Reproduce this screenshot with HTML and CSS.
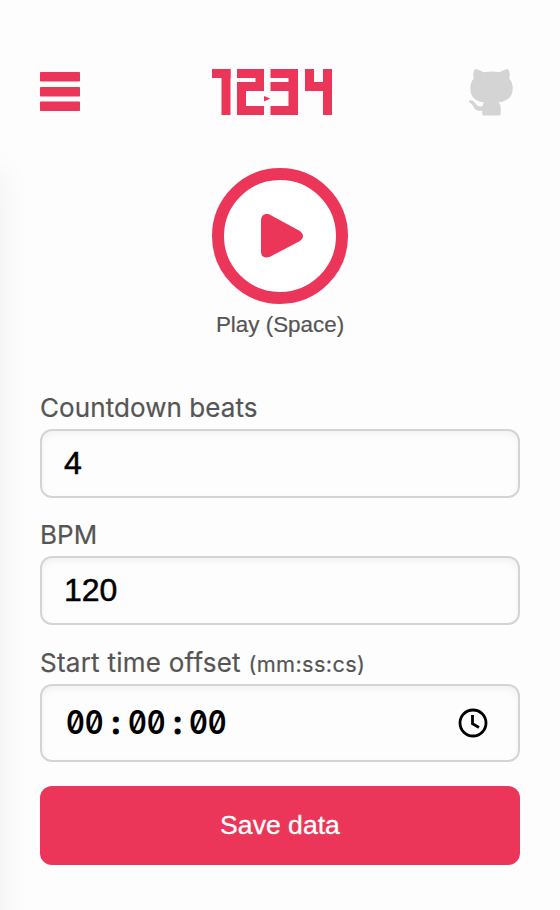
FILE: index.html
```html
<!DOCTYPE html>
<html lang="en">
<head>
<meta charset="utf-8">
<title>1234</title>
<link rel="stylesheet" href="styles.css">
</head>
<body>
<div class="drawer"></div>
<header class="header">
  <a class="menu" aria-label="Menu"><svg width="40" height="40" viewBox="0 0 40 40"><rect y="0" width="40" height="9.500" rx=".7"/><rect y="15" width="40" height="9.500" rx=".7"/><rect y="29.500" width="40" height="9.500" rx=".7"/></svg></a>
  <svg class="logo" width="120" height="46" viewBox="0 0 120 46" role="img" aria-label="1234">
    <rect width="18.500" height="9"/><rect x="9.500" width="9" height="46"/>
    <rect x="25" width="27" height="9"/><rect x="43.500" width="8.500" height="22"/><rect x="25" y="13" width="27" height="9"/><rect x="25" y="13" width="9" height="33"/><rect x="25" y="37" width="27" height="9"/>
    <rect x="58.500" width="27" height="9"/><rect x="58.500" y="13" width="27" height="9"/><rect x="58.500" y="37" width="27" height="9"/><rect x="76.500" width="9.500" height="46"/>
    <rect x="93" width="9" height="22"/><rect x="93" y="13" width="27" height="9"/><rect x="111" width="9" height="46"/>
    <path d="M52 27l6.200 2.600-6.200 3z"/>
  </svg>
  <a class="github" aria-label="GitHub"><svg width="44" height="47" viewBox="0 0 44 47"><path d="M6 0C8 0 11.500 1.300 14.500 3.300Q22.500 1.500 30.500 3.300C33.500 1.300 37 0 39 0Q41.500 3.500 40.300 9.500Q43.700 13.500 43.700 19.500C43.700 27.500 39 32.300 29.500 33.500Q31.700 35.500 31.700 39V45Q31.700 46.500 30 46.500H15Q13.300 46.500 13.300 45V41.700C7.500 42.500 5.500 40 3.800 36.500Q2.700 34.500 .9 33.700C-.8 32.700-.2 31 2 31.200C4.500 31.400 6 33.500 7.300 35.500Q9.500 38.300 13.400 37.200Q13.700 34.800 15.300 33.500C6 32.300 1.300 27.500 1.300 19.500Q1.300 13.500 4.700 9.500Q3.500 3.500 6 0Z"/></svg></a>
</header>
<main>
  <div class="player">
    <button class="play" aria-label="Play"><svg width="42" height="46" viewBox="0 0 42 46"><path d="M0 7.500C0 2 4 0 8.500 1.500L38 17.500Q42 20 42 23T38 28.500L8.500 44Q0 46 0 38.500Z"/></svg></button>
    <div class="caption">Play (Space)</div>
  </div>
  <form class="form">
    <label class="label" for="beats">Countdown beats</label>
    <input class="input" id="beats" value="4">
    <label class="label" for="bpm">BPM</label>
    <input class="input bpm" id="bpm" value="120">
    <div class="label offset">Start time offset <span class="format">(mm:ss:cs)</span></div>
    <div class="input time">
      <div class="clock-value"><span class="pair">00</span><span class="colon">:</span><span class="pair">00</span><span class="colon">:</span><span class="pair">00</span></div>
      <svg width="30" height="30" viewBox="0 0 30 30"><circle cx="15" cy="15" r="13"/><path d="M14.500 7V15.700L21 19.500"/></svg>
    </div>
    <button class="save" type="button">Save data</button>
  </form>
</main>
</body>
</html>
```
FILE: styles.css
```css
* { box-sizing: border-box; }
body {
  margin: 0;
  height: 910px;
  overflow: hidden;
  background: #fdfdfd;
  color: #555;
  font-family: Inter, sans-serif;
}
svg { display: block; }
.drawer {
  position: absolute;
  top: 170px;
  left: -100px;
  width: 100px;
  height: 800px;
  box-shadow: 0 0 32px rgba(0, 0, 0, .06);
}
.header {
  display: flex;
  justify-content: space-between;
  align-items: flex-start;
  height: 168px;
  padding: 69px 47px 0 40px;
  fill: #eb3659;
}
.menu { width: 35px; padding-top: 3px; }
.menu svg { overflow: visible; }
.github { width: 44px; fill: #d4d4d4; }
.player { display: flex; flex-direction: column; align-items: center; }
.play {
  display: flex;
  align-items: center;
  width: 136px;
  height: 136px;
  padding: 0 0 0 37px;
  border: 12px solid #eb3659;
  border-radius: 50%;
  background: #fff;
  fill: #eb3659;
}
.caption {
  height: 88px;
  padding-top: 8px;
  font: 22.4px/25px "Liberation Sans", sans-serif;
  -webkit-text-stroke: .2px;
}
.form { display: flex; flex-direction: column; padding: 0 40px; }
.label {
  height: 37px;
  font-size: 26px;
  line-height: 32px;
  letter-spacing: .08px;
  white-space: nowrap;
  -webkit-text-stroke: .2px;
}
.offset { letter-spacing: .25px; }
.format { font-size: 21.7px; letter-spacing: .38px; }
.input {
  height: 69px;
  margin: 0 0 21px;
  padding: 0 22px 1px;
  border: 2px solid #d4d4d4;
  border-radius: 12px;
  background: #fdfdfd;
  box-shadow: inset 0 3px 6px rgba(0, 0, 0, .05);
  color: #000;
  font: 32px "Liberation Sans", sans-serif;
  -webkit-text-stroke: .5px;
}
.bpm { margin-bottom: 22px; }
.time {
  display: flex;
  align-items: center;
  justify-content: space-between;
  height: 78px;
  margin-bottom: 24px;
  padding: 0 30px 0 24px;
}
.time svg { fill: none; stroke: #000; stroke-width: 2.8; }
.clock-value {
  display: flex;
  font: 600 32px/38px Inter, sans-serif;
  font-feature-settings: "zero", "tnum";
  -webkit-text-stroke: 0;
}
.pair { width: 38px; transform: scaleX(.91); transform-origin: left; }
.colon { width: 23.7px; text-align: center; -webkit-text-stroke: 1px; }
.save {
  height: 79px;
  padding: 0 0 1px;
  border: 0;
  border-radius: 12px;
  background: #eb3659;
  color: #fff;
  font: 26.6px "Liberation Sans", sans-serif;
  -webkit-text-stroke: .3px;
}
```
